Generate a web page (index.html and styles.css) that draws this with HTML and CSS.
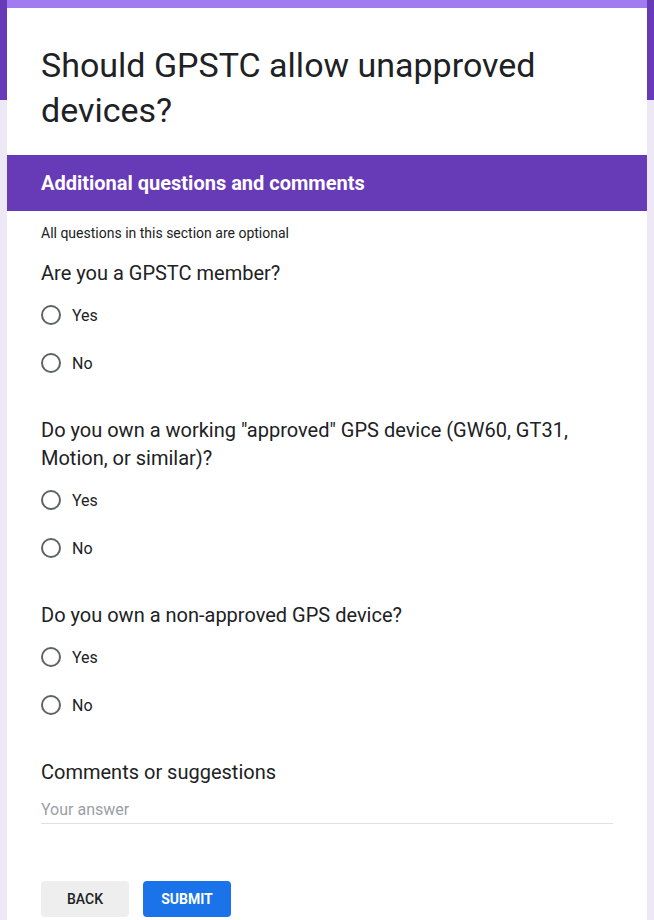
FILE: index.html
```html
<!DOCTYPE html>
<html>
<head>
<meta charset="utf-8">
<link rel="stylesheet" href="styles.css">
</head>
<body>
<div class="card">
  <div class="head">
    <h1 class="title">Should GPSTC allow unapproved devices?</h1>
  </div>
  <div class="section-bar">Additional questions and comments</div>
  <div class="body">
    <p class="note">All questions in this section are optional</p>

    <div class="question">
      <div class="q-title">Are you a GPSTC member?</div>
      <div class="options">
        <label class="opt"><span class="radio"></span><span class="opt-text">Yes</span></label>
        <label class="opt"><span class="radio"></span><span class="opt-text">No</span></label>
      </div>
    </div>

    <div class="question">
      <div class="q-title">Do you own a working "approved" GPS device (GW60, GT31, Motion, or similar)?</div>
      <div class="options">
        <label class="opt"><span class="radio"></span><span class="opt-text">Yes</span></label>
        <label class="opt"><span class="radio"></span><span class="opt-text">No</span></label>
      </div>
    </div>

    <div class="question">
      <div class="q-title">Do you own a non-approved GPS device?</div>
      <div class="options">
        <label class="opt"><span class="radio"></span><span class="opt-text">Yes</span></label>
        <label class="opt"><span class="radio"></span><span class="opt-text">No</span></label>
      </div>
    </div>

    <div class="question">
      <div class="q-title">Comments or suggestions</div>
      <div class="answer">Your answer</div>
    </div>

    <div class="buttons">
      <button class="btn btn-back">BACK</button>
      <button class="btn btn-submit">SUBMIT</button>
    </div>
  </div>
</div>
</body>
</html>
```
FILE: styles.css
```css
html, body {
  margin: 0;
  padding: 0;
}
body {
  background: linear-gradient(#673ab7 0, #673ab7 100px, #ede7f6 100px);
  min-height: 920px;
  font-family: Roboto, "Liberation Sans", Arial, sans-serif;
  color: #202124;
}
.card {
  margin: 0 7px;
  width: 640px;
  background: #fff;
  min-height: 920px;
}
.head {
  border-top: 8px solid #a07cf0;
  padding: 35px 34px 22px 34px;
}
.title {
  margin: 0;
  font-size: 34px;
  line-height: 45px;
  font-weight: 400;
  color: #202124;
}
.section-bar {
  height: 56px;
  background: #673ab7;
  color: #fff;
  font-size: 20px;
  font-weight: 700;
  display: flex;
  align-items: center;
  padding: 0 34px;
}
.body {
  padding: 12px 34px 0 34px;
}
.note {
  margin: 0;
  font-size: 14px;
  line-height: 20px;
}
.question {
  margin-top: 29px;
}
.note + .question {
  margin-top: 16px;
}
.q-title {
  font-size: 20px;
  line-height: 28px;
}
.options {
  margin-top: 4px;
  display: flex;
  flex-direction: column;
}
.opt {
  height: 48px;
  display: flex;
  align-items: center;
  gap: 11px;
}
.radio {
  width: 16px;
  height: 16px;
  border: 2px solid #5f6368;
  border-radius: 50%;
  flex: none;
}
.opt-text {
  font-size: 16px;
}
.answer {
  margin-top: 14px;
  font-size: 16px;
  line-height: 20px;
  color: #9aa0a6;
  padding-bottom: 3px;
  border-bottom: 1px solid #e0e0e0;
}
.buttons {
  margin-top: 57px;
  display: flex;
  gap: 14px;
}
.btn {
  width: 88px;
  height: 36px;
  border: none;
  border-radius: 4px;
  font-family: Roboto, "Liberation Sans", Arial, sans-serif;
  font-size: 14px;
  font-weight: 500;
  padding: 0;
}
.btn-back {
  background: #eeeeee;
  color: #202124;
}
.btn-submit {
  background: #1a73e8;
  color: #fff;
  font-weight: 700;
}
```
